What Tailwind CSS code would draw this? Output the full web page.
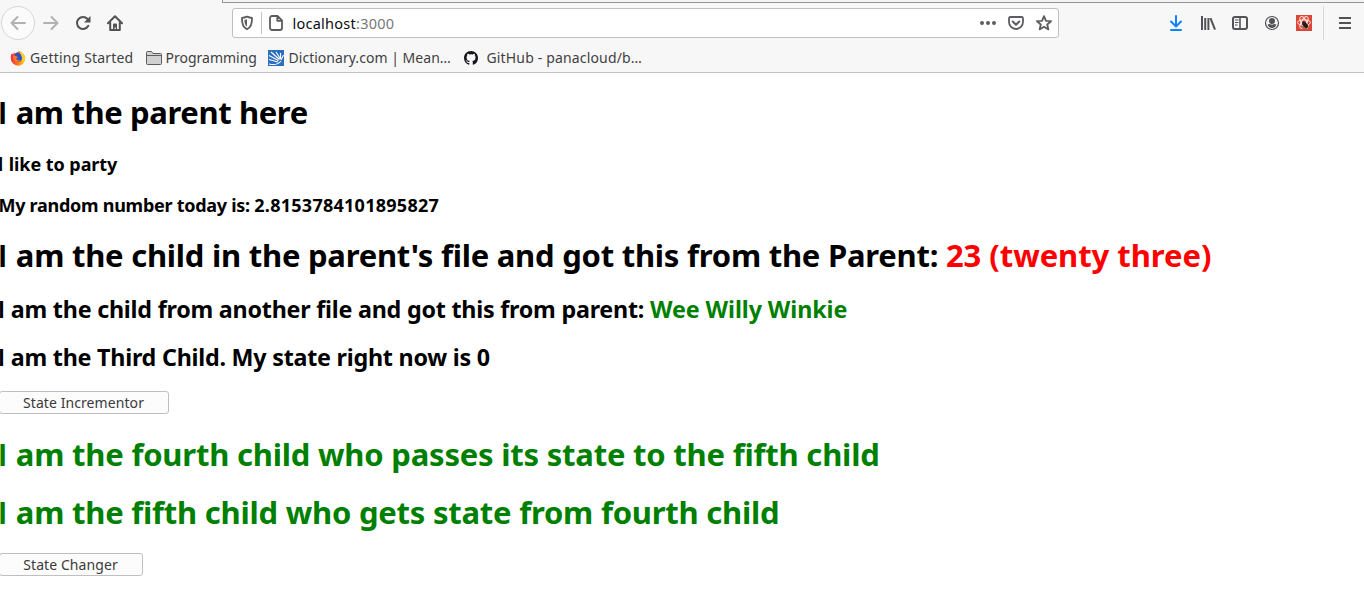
<!DOCTYPE html>
<html lang="en">
<head>
<meta charset="utf-8">
<title>localhost:3000</title>
<script src="https://cdn.jsdelivr.net/npm/@tailwindcss/browser@4"></script>
</head>
<body class="h-[595px] w-[1364px] overflow-hidden bg-white font-['Noto_Sans','Open_Sans',sans-serif] whitespace-nowrap">
<header class="flex h-[73px] flex-col border-b border-[#c2c2c3] bg-[#f7f7f8]">
  <div class="flex h-[3px] shrink-0"><div class="w-[223px] border-r border-[#979798]"></div><div class="flex-1 border-b border-[#979798] bg-[#f3f3f4]"></div></div>
  <nav class="flex h-10 shrink-0 items-center text-[#535355]">
    <div class="ml-px flex size-[34px] items-center justify-center rounded-full border border-[#d6d6d7] bg-[#fbfbfc] text-[#b1b1b3]">
      <svg class="size-4" viewBox="0 0 16 16" fill="none" stroke="currentColor" stroke-width="2" stroke-linecap="round" stroke-linejoin="round"><path d="M15 8H1.500M7.500 2l-6 6 6 6"/></svg>
    </div>
    <svg class="ml-2 size-4 text-[#b1b1b3]" viewBox="0 0 16 16" fill="none" stroke="currentColor" stroke-width="2" stroke-linecap="round" stroke-linejoin="round"><path d="M1 8h13.500M8.500 2l6 6-6 6"/></svg>
    <svg class="ml-4 size-4" viewBox="0 0 16 16"><path d="M13.300 10.800A6 6 0 1 1 12.500 4" fill="none" stroke="currentColor" stroke-width="2" stroke-linecap="round"/><path d="M15.500 1v6.500H9z" fill="currentColor"/></svg>
    <svg class="ml-4 size-4" viewBox="0 0 16 16"><path d="M1 8.200 8 1.200l7 7M3.200 7.500V15h9.600V7.500" fill="none" stroke="currentColor" stroke-width="2" stroke-linecap="round" stroke-linejoin="round"/><path d="M6 15V9.500A1 1 0 0 1 7 8.500h2a1 1 0 0 1 1 1V15H8.800v-2.500H7.500V15z" fill="currentColor"/></svg>
    <div class="ml-[109px] flex h-[30px] w-[827px] items-center rounded-[3px] border border-[#c0c0c1] bg-white text-[#5d5d5f]">
      <svg class="ml-1.5 size-4" viewBox="0 0 16 16"><path d="M8 1.700c2 .8 3.700 1.200 5 1.300.2 5.500-1 9.300-5 11.300C4 12.300 2.800 8.500 3 3c1.300-.1 3-.5 5-1.300z" fill="none" stroke="currentColor" stroke-width="1.800" stroke-linejoin="round"/><path d="M8 4.300v7.400c-1.900-1.400-2.600-3.500-2.600-6.700z" fill="currentColor"/></svg>
      <span class="ml-1.5 h-[22px] w-px bg-[#c4c4c5]"></span>
      <svg class="ml-1.5 size-4" viewBox="0 0 16 16" fill="none" stroke="currentColor" stroke-width="1.800" stroke-linejoin="round"><path d="M4 1h5.500L14 5.500V13a2 2 0 0 1-2 2H4a2 2 0 0 1-2-2V3a2 2 0 0 1 2-2zM9.300 1v4.800H14"/></svg>
      <span class="ml-2 flex-1 pl-[0.5px] text-[14.5px] leading-5 tracking-[0.25px] text-[#77777a]"><span class="text-[#0c0c0d]">localhost</span>:3000</span>
      <svg class="size-4" viewBox="0 0 16 16" fill="currentColor"><circle cx="2" cy="8" r="2"/><circle cx="8" cy="8" r="2"/><circle cx="14" cy="8" r="2"/></svg>
      <svg class="ml-3 size-4" viewBox="0 0 16 16" fill="none" stroke="currentColor" stroke-width="1.800" stroke-linecap="round" stroke-linejoin="round"><path d="M2.500 2h11A1.500 1.500 0 0 1 15 3.500V7A7 7 0 0 1 1 7V3.500A1.500 1.500 0 0 1 2.500 2z"/><path d="m4.700 6.500 3.300 3.200 3.300-3.200" stroke-width="2"/></svg>
      <svg class="mr-1.5 ml-3 size-4" viewBox="0 0 16 16" fill="none" stroke="currentColor" stroke-width="1.800" stroke-linejoin="round"><path d="m8 1.200 2 4.600 5 .4-3.800 3.300 1.200 4.900L8 11.700l-4.400 2.700 1.200-4.900L1 6.200l5-.4z"/></svg>
    </div>
    <svg class="ml-[109px] size-4 text-[#0a84ff]" viewBox="0 0 16 16" fill="none" stroke="currentColor" stroke-width="2" stroke-linecap="round" stroke-linejoin="round"><path d="M8 1v10M3 6.500l5 5 5-5M3 15h10"/></svg>
    <svg class="ml-4 size-4" viewBox="0 0 16 16" fill="none" stroke="currentColor" stroke-width="2"><path d="M2 1v14M5.200 3v12M8.400 3v12M10.500 3.200l4.500 11.500"/></svg>
    <svg class="ml-4 size-4" viewBox="0 0 16 16" fill="none" stroke="currentColor"><rect x="1" y="2" width="14" height="12" rx="2" stroke-width="2"/><path d="M8 2v12" stroke-width="1.600"/><path d="M3 5h3.500M3 7.500h3.500M3 10h2.500"/></svg>
    <svg class="ml-4 size-4" viewBox="0 0 16 16"><circle cx="8" cy="8" r="6.500" fill="none" stroke="currentColor" stroke-width="1.200"/><circle cx="8" cy="6" r="3" fill="currentColor"/><path d="M3.500 9.500 6 9q2 1.400 4 0l2.500.5Q11 13 8 13t-4.500-3.500z" fill="currentColor"/></svg>
    <svg class="ml-4 size-4" viewBox="0 0 16 16"><path fill="#dc4636" d="M0 0h16v16H0z"/><g fill="none" stroke="#fff" stroke-opacity=".85"><ellipse cx="8" cy="7.500" rx="6.500" ry="2.700"/><ellipse cx="8" cy="7.500" rx="6.500" ry="2.700" transform="rotate(60 8 7.500)"/><ellipse cx="8" cy="7.500" rx="6.500" ry="2.700" transform="rotate(120 8 7.500)"/></g><ellipse cx="9.300" cy="10.300" rx="2.200" ry="3.200" fill="#241c1c" transform="rotate(-35 9.300 10.300)"/><circle cx="7.500" cy="7.800" r="1.300" fill="#241c1c"/><path d="M6 9l6.500 3M9 7l1 7M6.500 13l6-4.500" stroke="#241c1c" stroke-width=".8"/></svg>
    <span class="ml-[11px] h-[34px] w-px bg-[#d9d9da]"></span>
    <svg class="ml-[13px] size-4" viewBox="0 0 16 16" fill="none" stroke="currentColor" stroke-width="2"><path d="M2 3h12M2 8h12M2 13h12"/></svg>
  </nav>
  <div class="flex h-[29px] items-center text-[14px] leading-5 text-[#3f3f41]">
    <svg class="ml-[10px] size-4" viewBox="0 0 16 16"><defs><linearGradient id="fx" x1="0" y1=".3" x2="1" y2=".5"><stop offset="0" stop-color="#f5224d"/><stop offset=".5" stop-color="#ff6a20"/><stop offset="1" stop-color="#ffc928"/></linearGradient></defs><path d="M1.500 3.500 3 4.500 4 2.500 5.500 4 9 1c3.500 1.200 6.300 4 6.300 7.700A7.200 7.200 0 0 1 8 15.700 7.200 7.200 0 0 1 .8 8.500c0-2 .2-3.500.7-5z" fill="url(#fx)"/><path d="M5 3.700C7 1.500 10 2.500 11.500 5.500c1 2.500.3 5-1.500 6C7.500 12.500 5 11 4.500 9z" fill="#2b50c8"/><path d="M8.500 1c4.500 1.200 6.500 4.500 6.500 7.500-.8 2-1.500 3-3 4 1.200-4.500-.5-8-3.500-11.500z" fill="#ffd02b"/><path d="M3 5.500 6 6l2 1.300-2 1.700q1.500 1.500 4.500 1-2 2.500-4.500 1.500Q3 10 3 5.500z" fill="#ff7a1d"/></svg>
    <span class="ml-1 w-[103px] tracking-[0.18px]">Getting Started</span>
    <svg class="ml-[13px] size-4" viewBox="0 0 16 16"><path d="M.5 13.500v-11a1 1 0 0 1 1-1h4l1.500 2h7.500a1 1 0 0 1 1 1v9a1 1 0 0 1-1 1h-13a1 1 0 0 1-1-1zM.5 5.500h15" fill="#d0d0d1" stroke="#5d5d5f"/></svg>
    <span class="ml-[3.5px] w-[90.5px]">Programming</span>
    <svg class="ml-3 size-4" viewBox="0 0 16 16"><path fill="#2d6fbd" d="M0 0h16v16H0z"/><path d="M1 14c6 1.500 10-.5 12-3M1 9.500 10 12M1 5.500l9.500 5M3 2l8.500 7.500M8 2l4.500 7M12.500 3v6M15.500 5l-2.500 5" fill="none" stroke="#fff" stroke-width="1.100"/></svg>
    <span class="ml-[4.5px] w-[162.5px] tracking-[0.03px]">Dictionary.com | Mean…</span>
    <svg class="ml-3 size-4" viewBox="0 0 16 16"><path fill="#161719" d="M8 1C4 1 1 4.100 1 8c0 3.100 2 5.700 4.800 6.700.3.100.5-.2.500-.4v-1.400c-2 .4-2.400-.9-2.400-.9-.3-.8-.8-1-.8-1-.6-.4.100-.4.100-.4.700 0 1.100.7 1.100.7.600 1.100 1.600.8 2 .6.100-.5.300-.8.500-.9-1.600-.2-3.200-.8-3.200-3.500 0-.8.300-1.400.7-1.900-.1-.2-.3-.9.100-1.900 0 0 .6-.2 1.900.7a6.600 6.600 0 0 1 3.500 0c1.300-.9 1.900-.7 1.900-.7.400 1 .1 1.700.1 1.900.4.500.7 1.100.7 1.900 0 2.700-1.600 3.300-3.200 3.500.3.200.5.600.5 1.300v2c0 .2.100.5.500.4A7 7 0 0 0 15 8c0-3.900-3-7-7-7z"/></svg>
    <span class="ml-[7.5px] tracking-[0.16px]">GitHub - panacloud/b…</span>
  </div>
</header>
<main class="flex flex-col items-start text-black">
  <h1 class="mt-[19px] h-10 text-[31px] leading-10 font-bold tracking-[-0.38px]"><span class="-ml-[2px] inline-block w-[10px] font-['Lato']">I</span> am the parent here</h1>
  <h4 class="mt-5 h-6 text-[18px] leading-6 font-bold tracking-[-0.05px]"><span class="-ml-[2px] inline-block w-[6px] font-['Lato']">I</span> like to party</h4>
  <h4 class="-ml-[1.5px] mt-[17px] h-6 text-[18px] leading-6 font-bold tracking-[-0.27px]">My random number today is: <span class="tracking-[0.26px]">2.8153784101895827</span></h4>
  <h1 class="mt-[18px] h-10 text-[31px] leading-10 font-bold tracking-[-0.24px]"><span class="-ml-[2px] inline-block w-[10px] font-['Lato']">I</span> am the child in the parent's file and got this from the Parent: <span class="tracking-[-0.05px] text-[#ff0000]">23 (twenty three)</span></h1>
  <h2 class="mt-[18px] h-8 text-[23.3px] leading-8 font-bold tracking-[-0.23px]"><span class="-ml-[2px] inline-block w-[7px] font-['Lato']">I</span> am the child from another file and got this from parent: <span class="tracking-[-0.08px] text-[#008000]">Wee Willy Winkie</span></h2>
  <h2 class="mt-4 h-8 text-[23.3px] leading-8 font-bold tracking-[-0.24px]"><span class="-ml-[2px] inline-block w-[7px] font-['Lato']">I</span> am the Third Child. My state right now is 0</h2>
  <button class="-ml-px mt-[18px] h-[23px] w-[170px] rounded-[3px] border border-[#bfbfc0] bg-[#fcfcfc] pr-px text-[14px] leading-5 tracking-[0.08px] text-[#3a3a3a]">State Incrementor</button>
  <h1 class="mt-5 h-10 text-[31px] leading-10 font-bold tracking-[-0.21px] text-[#008000]"><span class="-ml-[2px] inline-block w-[10px] font-['Lato']">I</span> am the fourth child who passes its state to the fifth child</h1>
  <h1 class="mt-[18px] h-10 text-[31px] leading-10 font-bold tracking-[-0.23px] text-[#008000]"><span class="-ml-[2px] inline-block w-[10px] font-['Lato']">I</span> am the fifth child who gets state from fourth child</h1>
  <button class="-ml-px mt-[21px] h-[23px] w-[144px] rounded-[3px] border border-[#bfbfc0] bg-[#fcfcfc] pr-px text-[14px] leading-5 tracking-[0.08px] text-[#3a3a3a]">State Changer</button>
</main>
</body>
</html>
